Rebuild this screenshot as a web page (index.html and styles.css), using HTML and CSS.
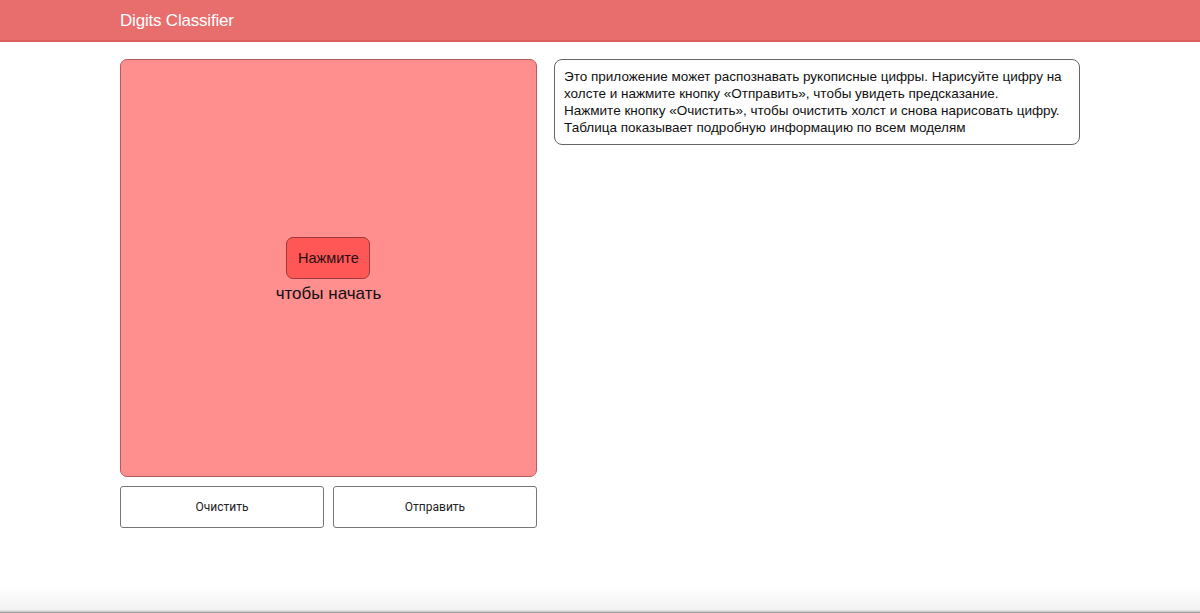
FILE: index.html
```html
<!DOCTYPE html>
<html lang="ru">
<head>
<meta charset="utf-8">
<title>Digits Classifier</title>
<link rel="stylesheet" href="styles.css">
</head>
<body>
<header class="topbar">
  <div class="topbar-inner">Digits Classifier</div>
</header>
<main class="page">
  <section class="left">
    <div class="canvas">
      <div class="start">
        <button class="start-btn">Нажмите</button>
        <div class="start-text">чтобы начать</div>
      </div>
    </div>
    <div class="actions">
      <button class="action">Очистить</button>
      <button class="action">Отправить</button>
    </div>
  </section>
  <section class="right">
    <div class="info">Это приложение может распознавать рукописные цифры. Нарисуйте цифру на холсте и нажмите кнопку «Отправить», чтобы увидеть предсказание.<br>Нажмите кнопку «Очистить», чтобы очистить холст и снова нарисовать цифру.<br>Таблица показывает подробную информацию по всем моделям</div>
  </section>
</main>
</body>
</html>
```

FILE: styles.css
```css
html, body {
  margin: 0;
  padding: 0;
  height: 100%;
}
body {
  font-family: "Liberation Sans", Arial, sans-serif;
  color: #111;
  background: linear-gradient(to bottom, #fff 0, #fff calc(100% - 26px), #f2f2f2 calc(100% - 3px), #bbb calc(100% - 1px), #888 100%);
}
.topbar {
  background: #e86d6d;
  border-bottom: 2px solid #dc5f5f;
  height: 40px;
}
.topbar-inner {
  width: 960px;
  margin: 0 auto;
  color: #fff;
  font-size: 17px;
  line-height: 41px;
  letter-spacing: -0.2px;
}
.page {
  width: 960px;
  margin: 17px auto 0;
  display: flex;
  gap: 17px;
  align-items: flex-start;
}
.left {
  width: 417px;
  flex: none;
}
.canvas {
  box-sizing: border-box;
  height: 418px;
  background: #ff8e8e;
  border: 1px solid #b45c5c;
  border-radius: 7px;
  display: flex;
  align-items: center;
  justify-content: center;
}
.start {
  display: flex;
  flex-direction: column;
  align-items: center;
  margin-top: 4px;
}
.start-btn {
  box-sizing: border-box;
  width: 84px;
  height: 42px;
  background: #ff5656;
  border: 1px solid #9c3a3a;
  border-radius: 7px;
  font-family: "Liberation Sans", Arial, sans-serif;
  font-size: 14.5px;
  color: #2a1010;
  padding: 0;
}
.start-text {
  font-size: 17px;
  margin-top: 5px;
  color: #111;
}
.actions {
  display: flex;
  gap: 9px;
  margin-top: 9px;
}
.action {
  flex: 1;
  box-sizing: border-box;
  height: 42px;
  background: #fff;
  border: 1px solid #777;
  border-radius: 3px;
  font-family: Roboto, "Liberation Sans", sans-serif;
  font-size: 12px;
  color: #222;
}
.right {
  width: 526px;
  flex: none;
}
.info {
  box-sizing: border-box;
  border: 1px solid #666;
  border-radius: 8px;
  padding: 8px 9px 8px;
  font-size: 13.5px;
  line-height: 17px;
  color: #111;
}
```
